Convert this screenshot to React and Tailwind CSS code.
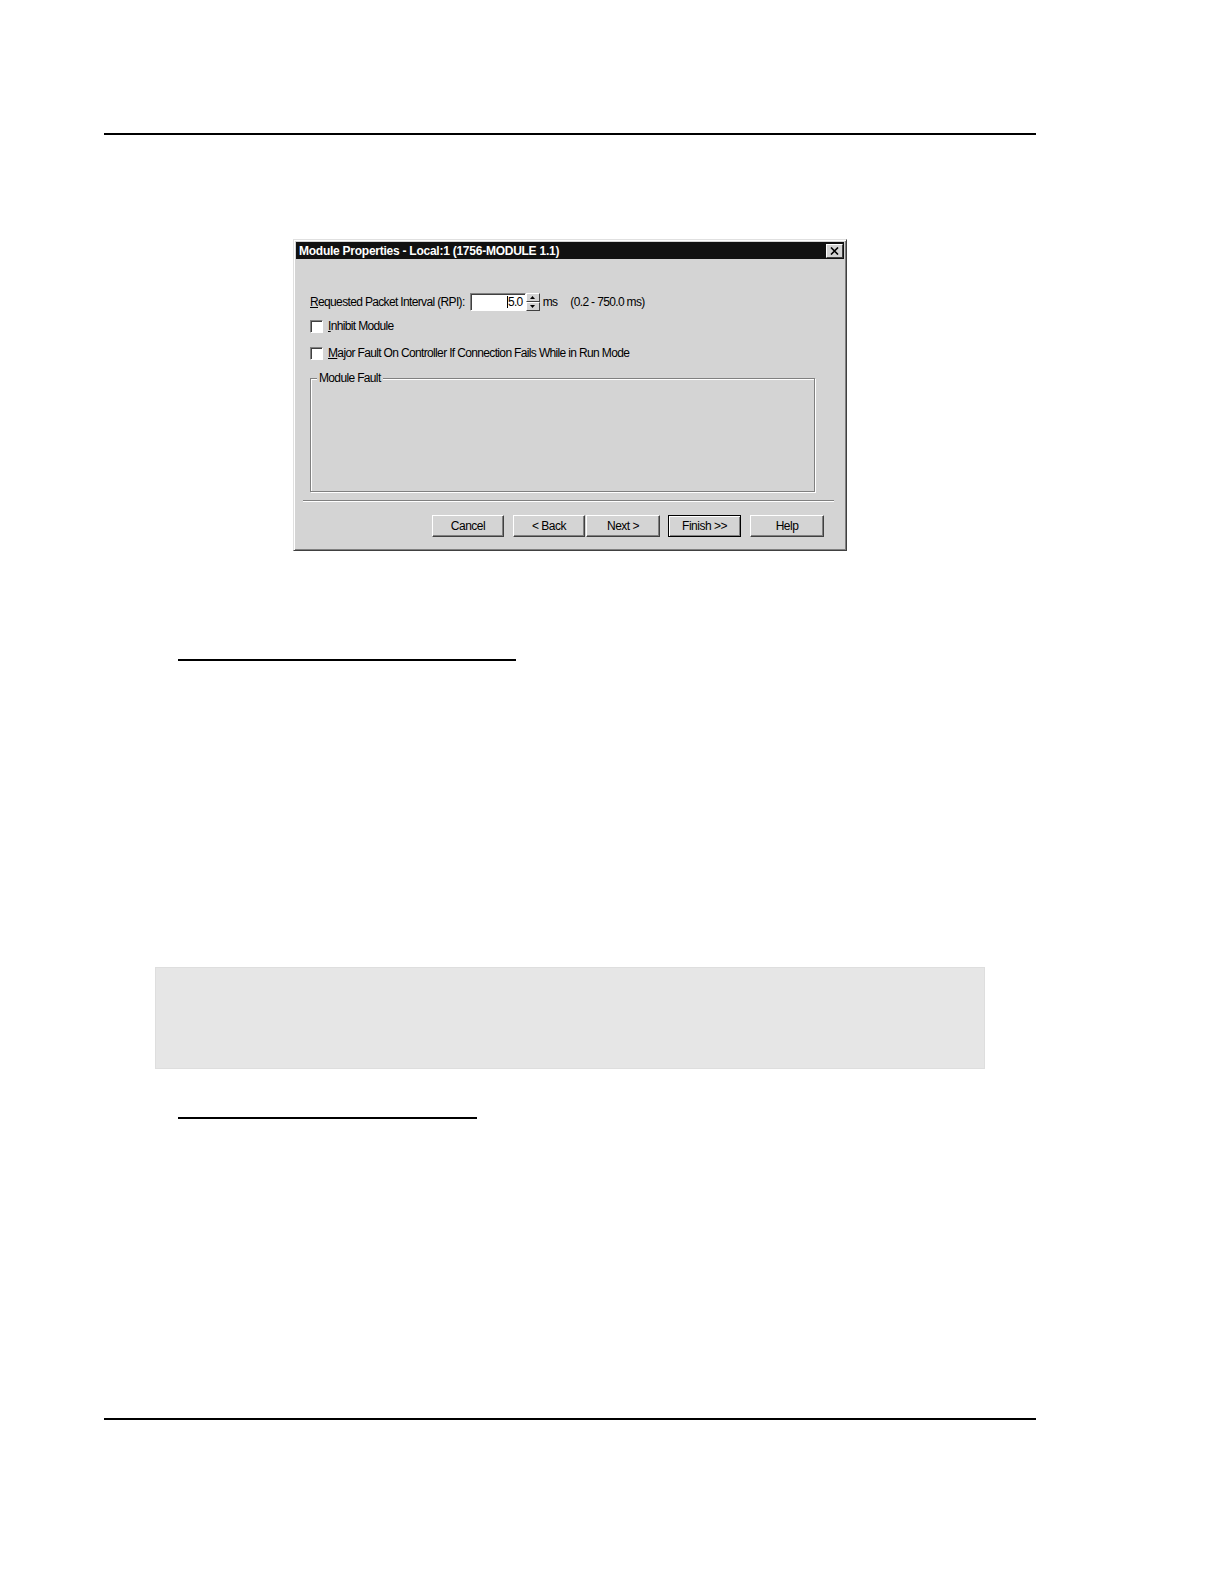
import React from "react";

const font = { fontFamily: '"Liberation Sans", Arial, sans-serif' };

const Checkbox = ({ label, first }) => (
  <div className="flex items-center h-[13px]">
    <div className="w-[13px] h-[13px] bg-white border-t border-l border-[#808080] border-b border-r border-b-white border-r-white shadow-[inset_1px_1px_0_#404040]" />
    <span className="ml-[5px] text-[12px] leading-[13px] tracking-[-0.65px] text-black">
      <span className="underline">{first}</span>
      {label}
    </span>
  </div>
);

const WinButton = ({ children, def, className = "" }) => (
  <div
    className={`h-[22px] flex items-center justify-center text-[12px] tracking-[-0.5px] text-black bg-[#d4d4d4] ${
      def
        ? "border border-black shadow-[inset_1px_1px_0_#ffffff,inset_-1px_-1px_0_#808080]"
        : "border-t border-l border-white border-b border-r border-b-[#404040] border-r-[#404040] shadow-[inset_-1px_-1px_0_#808080]"
    } ${className}`}
  >
    {children}
  </div>
);

const Dialog = () => (
  <div
    className="ml-[293px] mt-[104px] w-[554px] h-[312px] bg-[#d4d4d4] border border-t-[#e0e0e0] border-l-[#e0e0e0] border-b-[#404040] border-r-[#404040] shadow-[inset_1px_1px_0_#ffffff,inset_-1px_-1px_0_#808080] p-[2px] flex flex-col"
    style={font}
  >
    {/* title bar */}
    <div className="h-[17px] bg-[#111111] flex items-center justify-between pl-[3px] pr-[1px]">
      <span className="text-white font-bold text-[12px] tracking-[-0.25px] leading-none">
        Module Properties - Local:1 (1756-MODULE 1.1)
      </span>
      <div className="w-[17px] h-[14px] bg-[#d4d4d4] border-t border-l border-white border-b border-r border-b-[#404040] border-r-[#404040] flex items-center justify-center">
        <svg width="9" height="8" viewBox="0 0 9 8">
          <path d="M1 0.5 L8 7.5 M8 0.5 L1 7.5" stroke="#000" strokeWidth="1.6" />
        </svg>
      </div>
    </div>

    <div className="flex flex-col pl-[14px] pt-[34px]">
      {/* RPI */}
      <div className="flex items-center h-[18px] text-[12px] tracking-[-0.65px] text-black">
        <span>
          <span className="underline">R</span>equested Packet Interval (RPI):
        </span>
        <div className="ml-[5px] w-[56px] h-[18px] bg-white border-t border-l border-[#808080] border-b border-r border-b-white border-r-white shadow-[inset_1px_1px_0_#404040] flex items-center justify-end pr-[2px]">
          <span className="border-l border-black leading-[12px]">5.0</span>
        </div>
        <div className="w-[14px] h-[18px] flex flex-col">
          <div className="h-[9px] bg-[#d4d4d4] border-t border-l border-white border-b border-r border-b-[#404040] border-r-[#404040] flex items-center justify-center">
            <svg width="5" height="3" viewBox="0 0 5 3">
              <path d="M2.5 0 L5 3 L0 3 Z" fill="#000" />
            </svg>
          </div>
          <div className="h-[9px] bg-[#d4d4d4] border-t border-l border-white border-b border-r border-b-[#404040] border-r-[#404040] flex items-center justify-center">
            <svg width="5" height="3" viewBox="0 0 5 3">
              <path d="M0 0 L5 0 L2.5 3 Z" fill="#000" />
            </svg>
          </div>
        </div>
        <span className="ml-[3px]">ms</span>
        <span className="ml-[13px]">(0.2 - 750.0 ms)</span>
      </div>

      <div className="mt-[9px]">
        <Checkbox first="I" label="nhibit Module" />
      </div>
      <div className="mt-[14px]">
        <Checkbox first="M" label="ajor Fault On Controller If Connection Fails While in Run Mode" />
      </div>

      {/* group box */}
      <div className="relative mt-[18px] w-[505px] h-[114px] border border-[#808080] shadow-[1px_1px_0_#ffffff,inset_1px_1px_0_#ffffff]">
        <span className="absolute left-[6px] -top-[8px] px-[2px] bg-[#d4d4d4] text-[12px] leading-[14px] tracking-[-0.65px] text-black">
          Module Fault
        </span>
      </div>
    </div>

    {/* separator */}
    <div className="ml-[7px] mt-[8px] w-[531px] h-[2px] border-t border-[#808080] border-b border-b-white" />

    {/* buttons */}
    <div className="flex mt-[13px] pl-[136px]">
      <WinButton className="w-[72px]">Cancel</WinButton>
      <WinButton className="w-[72px] ml-[9px]">&lt; Back</WinButton>
      <WinButton className="w-[74px] ml-[1px]">Next &gt;</WinButton>
      <WinButton def className="w-[73px] ml-[8px]">Finish &gt;&gt;</WinButton>
      <WinButton className="w-[74px] ml-[9px]">Help</WinButton>
    </div>
  </div>
);

export default function App() {
  return (
    <div className="w-[1224px] h-[1584px] bg-white flex flex-col overflow-hidden">
      <div className="mt-[133px] ml-[104px] w-[932px] h-[2px] bg-black" />

      <Dialog />

      <div className="mt-[108px] ml-[178px] w-[338px] h-[2px] bg-black" />

      <div className="mt-[306px] ml-[155px] w-[830px] h-[102px] bg-[#e6e6e6] border border-[#dedede]" />

      <div className="mt-[48px] ml-[178px] w-[299px] h-[2px] bg-black" />

      <div className="mt-[299px] ml-[104px] w-[932px] h-[2px] bg-black" />
    </div>
  );
}
